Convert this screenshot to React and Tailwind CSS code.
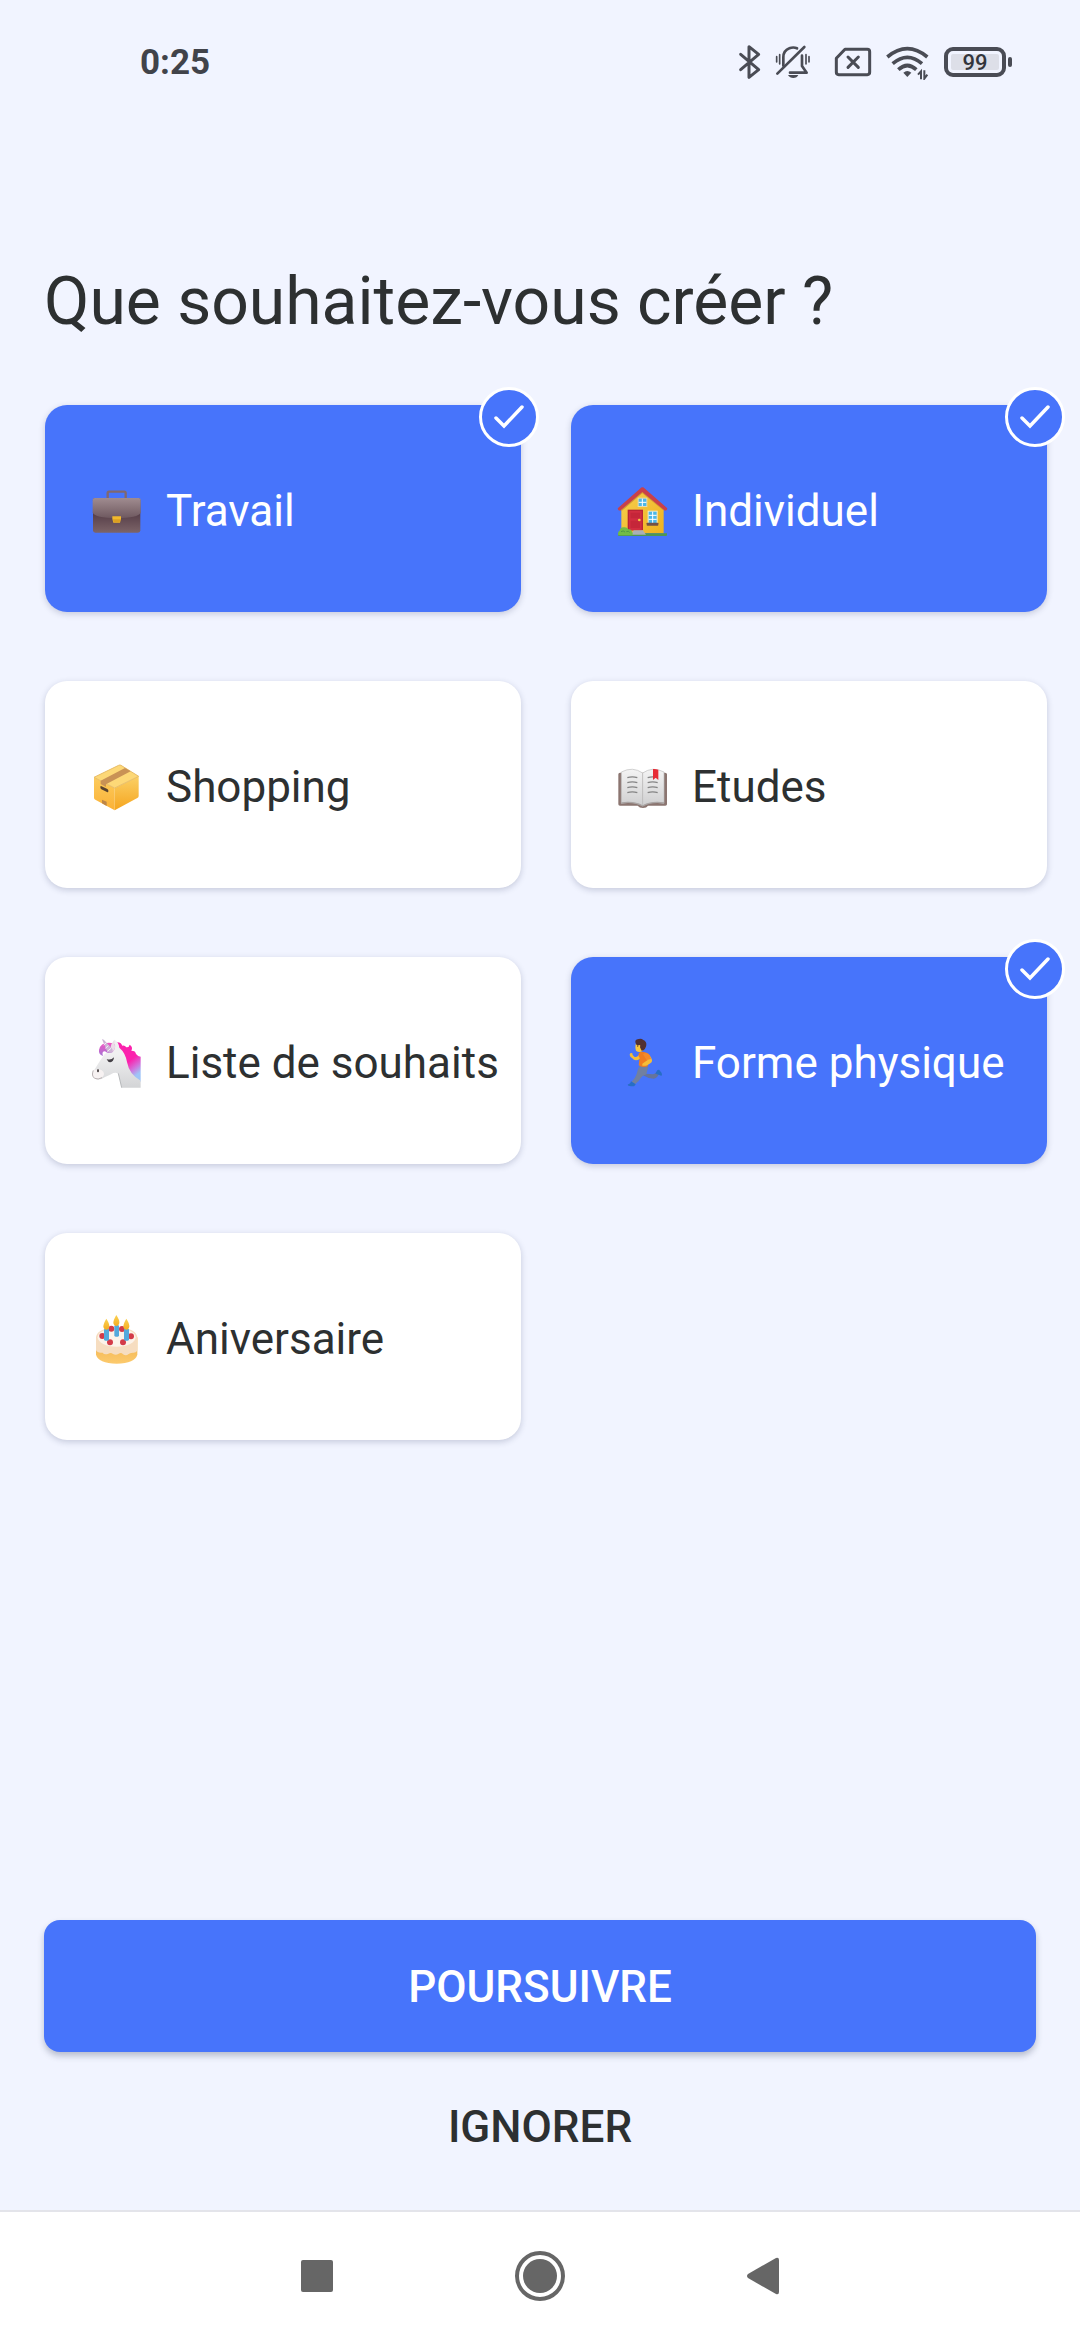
import { useState } from "react";

function Briefcase() {
  return (
    <svg viewBox="27 31 168 168" className="size-14 shrink-0" aria-hidden="true">
      <defs>
        <linearGradient id="caseTop" x1="0" y1="0" x2="0" y2="1">
          <stop offset="0" stopColor="#a08c90" />
          <stop offset="1" stopColor="#6f5960" />
        </linearGradient>
        <linearGradient id="caseBody" x1="0" y1="0" x2="0" y2="1">
          <stop offset="0.4" stopColor="#533b46" />
          <stop offset="1" stopColor="#7c6468" />
        </linearGradient>
      </defs>
      <path d="M83 84V67q0-4 4-4h46q4 0 4 4v17" fill="none" stroke="#80686f" strokeWidth="7" />
      <rect x="39" y="82" width="142" height="104" rx="7" fill="url(#caseBody)" />
      <path d="M38 88q0-6 6-6h132q6 0 6 6v38q-8 16-72 16t-72-16z" fill="url(#caseTop)" />
      <path d="M97 137h26v7l-3 12h-20l-3-12z" fill="#f2b92c" />
      <path d="M99 146h22l-2 9h-18z" fill="#dca021" />
    </svg>
  );
}

function House() {
  return (
    <svg viewBox="30 31 168 168" className="size-14 shrink-0" aria-hidden="true">
      <defs>
        <linearGradient id="wall" x1="0" y1="0" x2="1" y2="1">
          <stop offset="0" stopColor="#f6cf50" />
          <stop offset="1" stopColor="#efb21f" />
        </linearGradient>
      </defs>
      <path d="M49 112l63-54 64 54v76H49z" fill="url(#wall)" />
      <path d="M49 112l63-54 64 54v8l-64-52-63 54z" fill="#d39b32" />
      <path d="M112 50q4 0 8 4l66 58q2 3-1 6-4 3-8 0l-65-54-64 54q-4 3-8 0-3-3-1-6l66-58q4-4 7-4z" fill="#c9404a" />
      <rect x="98" y="81" width="29" height="28" fill="#e8dcae" />
      <rect x="101" y="84" width="23" height="22" fill="#4db7e8" />
      <path d="M112 84v22M101 95h23" stroke="#fff" strokeWidth="3" />
      <rect x="68" y="117" width="46" height="62" fill="#b82435" />
      <rect x="72" y="121" width="38" height="58" fill="#d12d40" />
      <path d="M77 126h28v17H77zM77 150h28v22H77z" fill="#c52639" />
      <circle cx="103" cy="148" r="4" fill="#f7c843" />
      <rect x="128" y="120" width="30" height="39" fill="#f7edc6" />
      <rect x="131" y="123" width="24" height="34" fill="#4db7e8" />
      <path d="M143 123v34M131 134h24M131 146h24" stroke="#fff" strokeWidth="3" />
      <rect x="125" y="156" width="35" height="9" rx="2" fill="#735247" />
      <path d="M39 188h147v5q0 3-3 3H42q-3 0-3-3z" fill="#4f9750" />
      <path d="M86 179h28l9 13H78z" fill="#aab0b5" />
      <path d="M40 194q-3-10 4-14 1-9 11-10 11-2 15 6 9-1 11 7 4 4 1 11z" fill="#72bb46" />
      <path d="M48 183q7-5 12 1M64 183q7-3 10 2" fill="none" stroke="#4e9845" strokeWidth="3" />
    </svg>
  );
}

function Parcel() {
  return (
    <svg viewBox="27 34 168 168" className="size-14 shrink-0" aria-hidden="true">
      <defs>
        <linearGradient id="boxRight" x1="0" y1="0" x2="0" y2="1">
          <stop offset="0" stopColor="#fbd066" />
          <stop offset="1" stopColor="#f5a51f" />
        </linearGradient>
        <linearGradient id="boxLeft" x1="0" y1="0" x2="0" y2="1">
          <stop offset="0" stopColor="#fccb5c" />
          <stop offset="1" stopColor="#fbb136" />
        </linearGradient>
      </defs>
      <path d="M42 95l62 32v67l-58-32q-4-2-4-6z" fill="url(#boxLeft)" />
      <path d="M104 127l72-35v59q0 4-4 6l-68 37z" fill="url(#boxRight)" />
      <path d="M42 95l74-36q4-2 7 0l53 33-72 35z" fill="#fdd877" />
      <path d="M42 95l74-36q4-2 7 0l53 33-72 35z" fill="none" stroke="#e8bd69" strokeWidth="3" />
      <path d="M62 105l73-38 17 10-74 39v8l-16-9z" fill="#c99255" />
      <path d="M63 121l19 9q4 2 3 7 0 4-4 2l-17-8q-3-2-3-6t2-4z" fill="#59432f" />
      <path d="M66 162l14 6v13l-14-8z" fill="#bd8648" />
    </svg>
  );
}

function Book() {
  return (
    <svg viewBox="30 34 168 168" className="size-14 shrink-0" aria-hidden="true">
      <defs>
        <linearGradient id="page" x1="0" y1="0" x2="0" y2="1">
          <stop offset="0" stopColor="#f4f4f4" />
          <stop offset="1" stopColor="#cfcfd0" />
        </linearGradient>
      </defs>
      <path d="M40 86q0-4 5-5h135q6 1 6 5v90q0 4-5 4h-52q-4 7-15 7t-16-7H45q-5 0-5-4z" fill="#8b7570" />
      <path d="M49 79q34-18 64 3v98q-26-15-64-7z" fill="url(#page)" stroke="#bcbcbc" strokeWidth="2" />
      <path d="M177 79q-34-18-64 3v98q26-15 64-7z" fill="url(#page)" stroke="#bcbcbc" strokeWidth="2" />
      <path d="M49 172q37-6 64 9 27-15 64-9" fill="none" stroke="#a9a4a3" strokeWidth="4" />
      <path
        d="M67 96q15-5 30 0M67 111q15-5 30 0M67 126q15-5 30 0M67 141q15-5 30 0M128 96q15-5 30 0M128 111q15-5 30 0M128 126q15-5 30 0M128 141q15-5 30 0"
        fill="none"
        stroke="#858585"
        strokeWidth="4"
      />
      <path d="M144 70q8-1 16 2v31l-8-7-8 7z" fill="#e72c36" />
    </svg>
  );
}

function Unicorn() {
  return (
    <svg viewBox="27 22 168 168" className="size-14 shrink-0" aria-hidden="true">
      <defs>
        <linearGradient id="mane" x1="0" y1="0" x2="0.5" y2="1">
          <stop offset="0.6" stopColor="#fb22ad" />
          <stop offset="0.82" stopColor="#d173dc" />
          <stop offset="1" stopColor="#9fc4f7" />
        </linearGradient>
        <linearGradient id="forelock" x1="0" y1="0" x2="0" y2="1">
          <stop offset="0" stopColor="#f154c3" />
          <stop offset="1" stopColor="#a576d5" />
        </linearGradient>
        <linearGradient id="coat" x1="0" y1="0" x2="0" y2="1">
          <stop offset="0.3" stopColor="#f0f0f1" />
          <stop offset="1" stopColor="#d3d4d6" />
        </linearGradient>
      </defs>
      <path d="M109 50q13-2 18 10 7-2 12 5 8 1 10-8 11 7 5 18 13 0 14 10 6 8 14 8v75q-29-2-42-30l-30-68z" fill="url(#mane)" />
      <path d="M103 42q13 6 15 24 18 15 23 43 7 38 41 56v21h-57l-10-42q-7-5-15-2-10 6-25 12-18 13-32 4-10-10 0-25 14-24 31-48l15-9z" fill="url(#coat)" />
      <path d="M43 133q-9 15 0 24 9 6 21-1 12-8 6-18-7-12-27-5z" fill="#f7f2f2" />
      <path d="M40 134q-7 16 4 24 10 5 22-2" fill="none" stroke="#bbb3b4" strokeWidth="3" />
      <path d="M95 52q-33-4-38 21-2 13 12 18-5-14 6-14 8 8 22 3 10-10 8-24z" fill="url(#forelock)" />
      <path d="M96 78q9-4 9-15l-2-21q-11 12-12 26z" fill="#ecdde8" />
      <path d="M66 41q3-1 6 2l25 27q4 8-5 11-8 2-11-5z" fill="#cdb3d6" />
      <path d="M78 52l-7 6M85 60l-9 8M93 68l-11 9" stroke="#f6eef8" strokeWidth="3" />
      <path d="M80 100q12 5 22-5-1 14-11 15-6 0-8-5z" fill="#444046" />
      <ellipse cx="54" cy="135" rx="3" ry="5" fill="#4b4445" />
      <path d="M115 143l10 43" stroke="#b7b9bb" strokeWidth="3" />
    </svg>
  );
}

function Runner() {
  return (
    <svg viewBox="30 22 168 168" className="size-14 shrink-0" aria-hidden="true">
      <path d="M126 124q3 12-6 20l24 2q7-1 11-8l8 5q-7 16-17 16-19-1-32-10z" fill="#66749b" />
      <path d="M102 118l28 4-6 24q-11 2-16 10-7 12-18 20l-10-8q10-8 15-23 2-14 10-27z" fill="#7180a0" />
      <path d="M154 139q3-8 9-6 8 8 8 15-1 4-8 0l-12-4z" fill="#276ec5" />
      <path d="M78 167l12 7q4 1 0 5l-3 3q-10 0-17-2-4-4 2-5 5-2 6-8z" fill="#276ec5" />
      <path d="M106 82q-10 16-18 11-7-5-6-10-8-3-8 5 1 6 7 9 10 13 24 2z" fill="#f5bd38" />
      <path d="M101 83q7-7 19-3 14 4 15 12l-7 30q-17 5-27-3l3-22q-5-5-3-14z" fill="#ef7c22" />
      <path d="M124 84q13 4 17 19 2 8-12 14-9 5-17 3-2-7 4-9l12-8-8-10z" fill="#f5bd38" />
      <path d="M114 86q12-9 21 4l3 10-13 3z" fill="#f58a2b" />
      <path d="M94 50q-5 15-1 25 9 7 19 1l10-12-5-17z" fill="#f8c63f" />
      <path d="M93 55q-7-14 8-15 8-3 14 3 10 4 9 15-2 16-14 17l-5-10q3-9-4-6-8 0-8-4z" fill="#513033" />
      <circle cx="98" cy="61" r="2" fill="#51382d" />
    </svg>
  );
}

function Cake() {
  return (
    <svg viewBox="27 25 168 168" className="size-14 shrink-0" aria-hidden="true">
      <defs>
        <linearGradient id="sponge" x1="0" y1="0" x2="0" y2="1">
          <stop offset="0" stopColor="#f0b04a" />
          <stop offset="1" stopColor="#fcca6d" />
        </linearGradient>
        <linearGradient id="flame" x1="0" y1="0" x2="0" y2="1">
          <stop offset="0" stopColor="#fbd354" />
          <stop offset="1" stopColor="#f4ac20" />
        </linearGradient>
      </defs>
      <path d="M48 110v52q7 26 62 27 55-1 62-27v-52z" fill="url(#sponge)" />
      <path d="M48 112q0-30 62-31 62 1 62 31v38q-6 8-14 6-9 0-13 5-7 6-16 0-5-7-13-2-8 6-17 1-6-6-14-1-12 5-17-3-16 2-20-7z" fill="#f6ddc0" />
      <ellipse cx="110" cy="110" rx="57" ry="28" fill="#fcf3e9" />
      <g fill="#d33b48">
        <circle cx="94" cy="84" r="9" />
        <circle cx="126" cy="85" r="9" />
        <circle cx="67" cy="106" r="9" />
        <circle cx="153" cy="107" r="9" />
        <circle cx="90" cy="125" r="9" />
        <circle cx="129" cy="125" r="9" />
      </g>
      <g fill="#53a9dc">
        <rect x="103" y="73" width="14" height="35" rx="4" />
        <rect x="72" y="84" width="15" height="36" rx="4" />
        <rect x="132" y="84" width="15" height="36" rx="4" />
      </g>
      <g fill="url(#flame)">
        <path d="M109 43q10 15 9 24-2 9-9 9t-9-9q0-9 9-24z" />
        <path d="M79 54q10 15 9 24-2 9-9 9t-9-9q0-9 9-24z" />
        <path d="M139 54q10 15 9 24-2 9-9 9t-9-9q0-9 9-24z" />
      </g>
    </svg>
  );
}

const CATEGORIES = [
  { label: "Travail", Icon: Briefcase },
  { label: "Individuel", Icon: House },
  { label: "Shopping", Icon: Parcel },
  { label: "Etudes", Icon: Book },
  { label: "Liste de souhaits", Icon: Unicorn },
  { label: "Forme physique", Icon: Runner },
  { label: "Aniversaire", Icon: Cake },
];

function CategoryCard({ label, Icon, checked, onChange }) {
  return (
    <label
      className={
        "relative flex h-[207px] cursor-pointer items-center gap-[21px] rounded-[22px] pl-11 text-[44px] whitespace-nowrap shadow-[0_2px_6px_rgba(40,50,90,0.22)] " +
        (checked ? "bg-[#4774fb] text-white" : "bg-white text-[#2d3031]")
      }
    >
      <input type="checkbox" className="sr-only" checked={checked} onChange={onChange} />
      <Icon />
      <span className="pt-1">{label}</span>
      {checked && (
        <span className="absolute -top-[18px] -right-[18px] flex size-[60px] items-center justify-center rounded-full border-3 border-white bg-[#4774fb]">
          <svg viewBox="0 0 30 24" className="h-6 w-[30px]" fill="none" stroke="#fff" strokeWidth="3.5" strokeLinecap="round" aria-hidden="true">
            <path d="M2 13l8 8L28 2" />
          </svg>
        </span>
      )}
    </label>
  );
}

function StatusBar() {
  return (
    <header className="flex h-[124px] items-center pr-[68px] pl-[140px] text-[#4a4c55]">
      <time className="pt-0.5 text-[35px] font-bold text-[#41434a]">0:25</time>
      <div className="ml-auto flex items-center">
        <svg viewBox="54 42 72 108" className="h-9 w-6" fill="none" stroke="currentColor" strokeWidth="9" strokeLinecap="round" strokeLinejoin="round" aria-label="Bluetooth">
          <path d="M62 73l54 46-29 23V50l29 23-54 46" />
        </svg>
        <svg viewBox="165 42 108 108" className="ml-[13px] h-9 w-9" fill="none" stroke="currentColor" strokeWidth="8" strokeLinecap="round" aria-label="Vibreur">
          <path d="M190 107V82q0-20 18-27 12-5 23 0M246 77v31l14 20h-50" strokeLinejoin="round" />
          <path d="M172 131l81-80" />
          <path d="M204 135h31q-4 9-15 9t-16-9z" fill="currentColor" stroke="none" />
          <path d="M170 80v16M179 74v28M258 74v28M267 80v16" strokeWidth="5" />
        </svg>
        <svg viewBox="342 42 114 108" className="ml-[23px] h-9 w-[38px]" fill="none" stroke="currentColor" strokeWidth="9" strokeLinecap="round" strokeLinejoin="round" aria-label="Pas de carte SIM">
          <path d="M375 58h67q7 0 7 7v62q0 7-7 7h-86q-7 0-7-7V85z" />
          <path d="M384 81l31 31M415 81l-31 31" />
        </svg>
        <svg viewBox="495 42 132 108" className="ml-[13px] h-9 w-11" fill="none" stroke="currentColor" strokeWidth="11" aria-label="Wi-Fi">
          <path d="M502 81q60-50 120 0M518 101q44-38 88 0M535 119q27-25 54 0" />
          <path d="M550 128q12-10 24 0l-12 13z" fill="currentColor" stroke="none" />
          <path d="M603 148v-24l-9 10M613 121v25l9-12" strokeWidth="6" />
        </svg>
        <div className="ml-[15px] flex items-center gap-0.5" role="img" aria-label="Batterie 99 %">
          <div className="flex h-[30px] w-[62px] rounded-[9px] border-4 border-current p-[3px]">
            <span className="flex flex-1 items-center justify-center rounded-xs bg-[#dddfe8] pt-0.5 text-[22px] leading-none font-medium text-[#33353b]">
              99
            </span>
          </div>
          <span className="h-2.5 w-1 rounded-full bg-current" />
        </div>
      </div>
    </header>
  );
}

function NavigationBar() {
  return (
    <nav className="flex h-[130px] items-center justify-center gap-[182px] border-t-2 border-[#e3e4ea] bg-white text-[#666666]">
      <button type="button" aria-label="Applications récentes">
        <span className="block size-8 rounded-xs bg-current" />
      </button>
      <button type="button" aria-label="Accueil">
        <span className="flex size-[50px] items-center justify-center rounded-full border-4 border-current">
          <span className="block size-[34px] rounded-full bg-current" />
        </span>
      </button>
      <button type="button" aria-label="Retour">
        <svg viewBox="0 0 32 38" className="h-[38px] w-8" fill="currentColor" aria-hidden="true">
          <path d="M1 17L29 1q3-1 3 2v32q0 3-3 2L1 21q-2-2 0-4z" />
        </svg>
      </button>
    </nav>
  );
}

export default function App() {
  const [selected, setSelected] = useState(["Travail", "Individuel", "Forme physique"]);

  const toggle = (label) =>
    setSelected((current) =>
      current.includes(label) ? current.filter((item) => item !== label) : [...current, label]
    );

  return (
    <div className="flex min-h-screen flex-col bg-[#f1f4ff] font-['Roboto',sans-serif] text-[#2d3031]">
      <StatusBar />
      <main className="flex flex-1 flex-col">
        <h1 className="mt-[138px] pl-11 text-[66px] leading-20">Que souhaitez-vous créer ?</h1>
        <div className="mt-[63px] grid grid-cols-2 gap-x-[50px] gap-y-[69px] pr-[33px] pl-[45px]">
          {CATEGORIES.map(({ label, Icon }) => (
            <CategoryCard
              key={label}
              label={label}
              Icon={Icon}
              checked={selected.includes(label)}
              onChange={() => toggle(label)}
            />
          ))}
        </div>
        <div className="mt-auto flex flex-col gap-2 px-11 pb-[18px]">
          <button
            type="button"
            className="h-[132px] rounded-2xl bg-[#4774fb] pt-0.5 text-[44px] font-medium text-white shadow-[0_4px_6px_rgba(40,50,80,0.28)]"
          >
            POURSUIVRE
          </button>
          <button type="button" className="h-[132px] pt-0.5 text-[44px] font-medium">
            IGNORER
          </button>
        </div>
      </main>
      <NavigationBar />
    </div>
  );
}
